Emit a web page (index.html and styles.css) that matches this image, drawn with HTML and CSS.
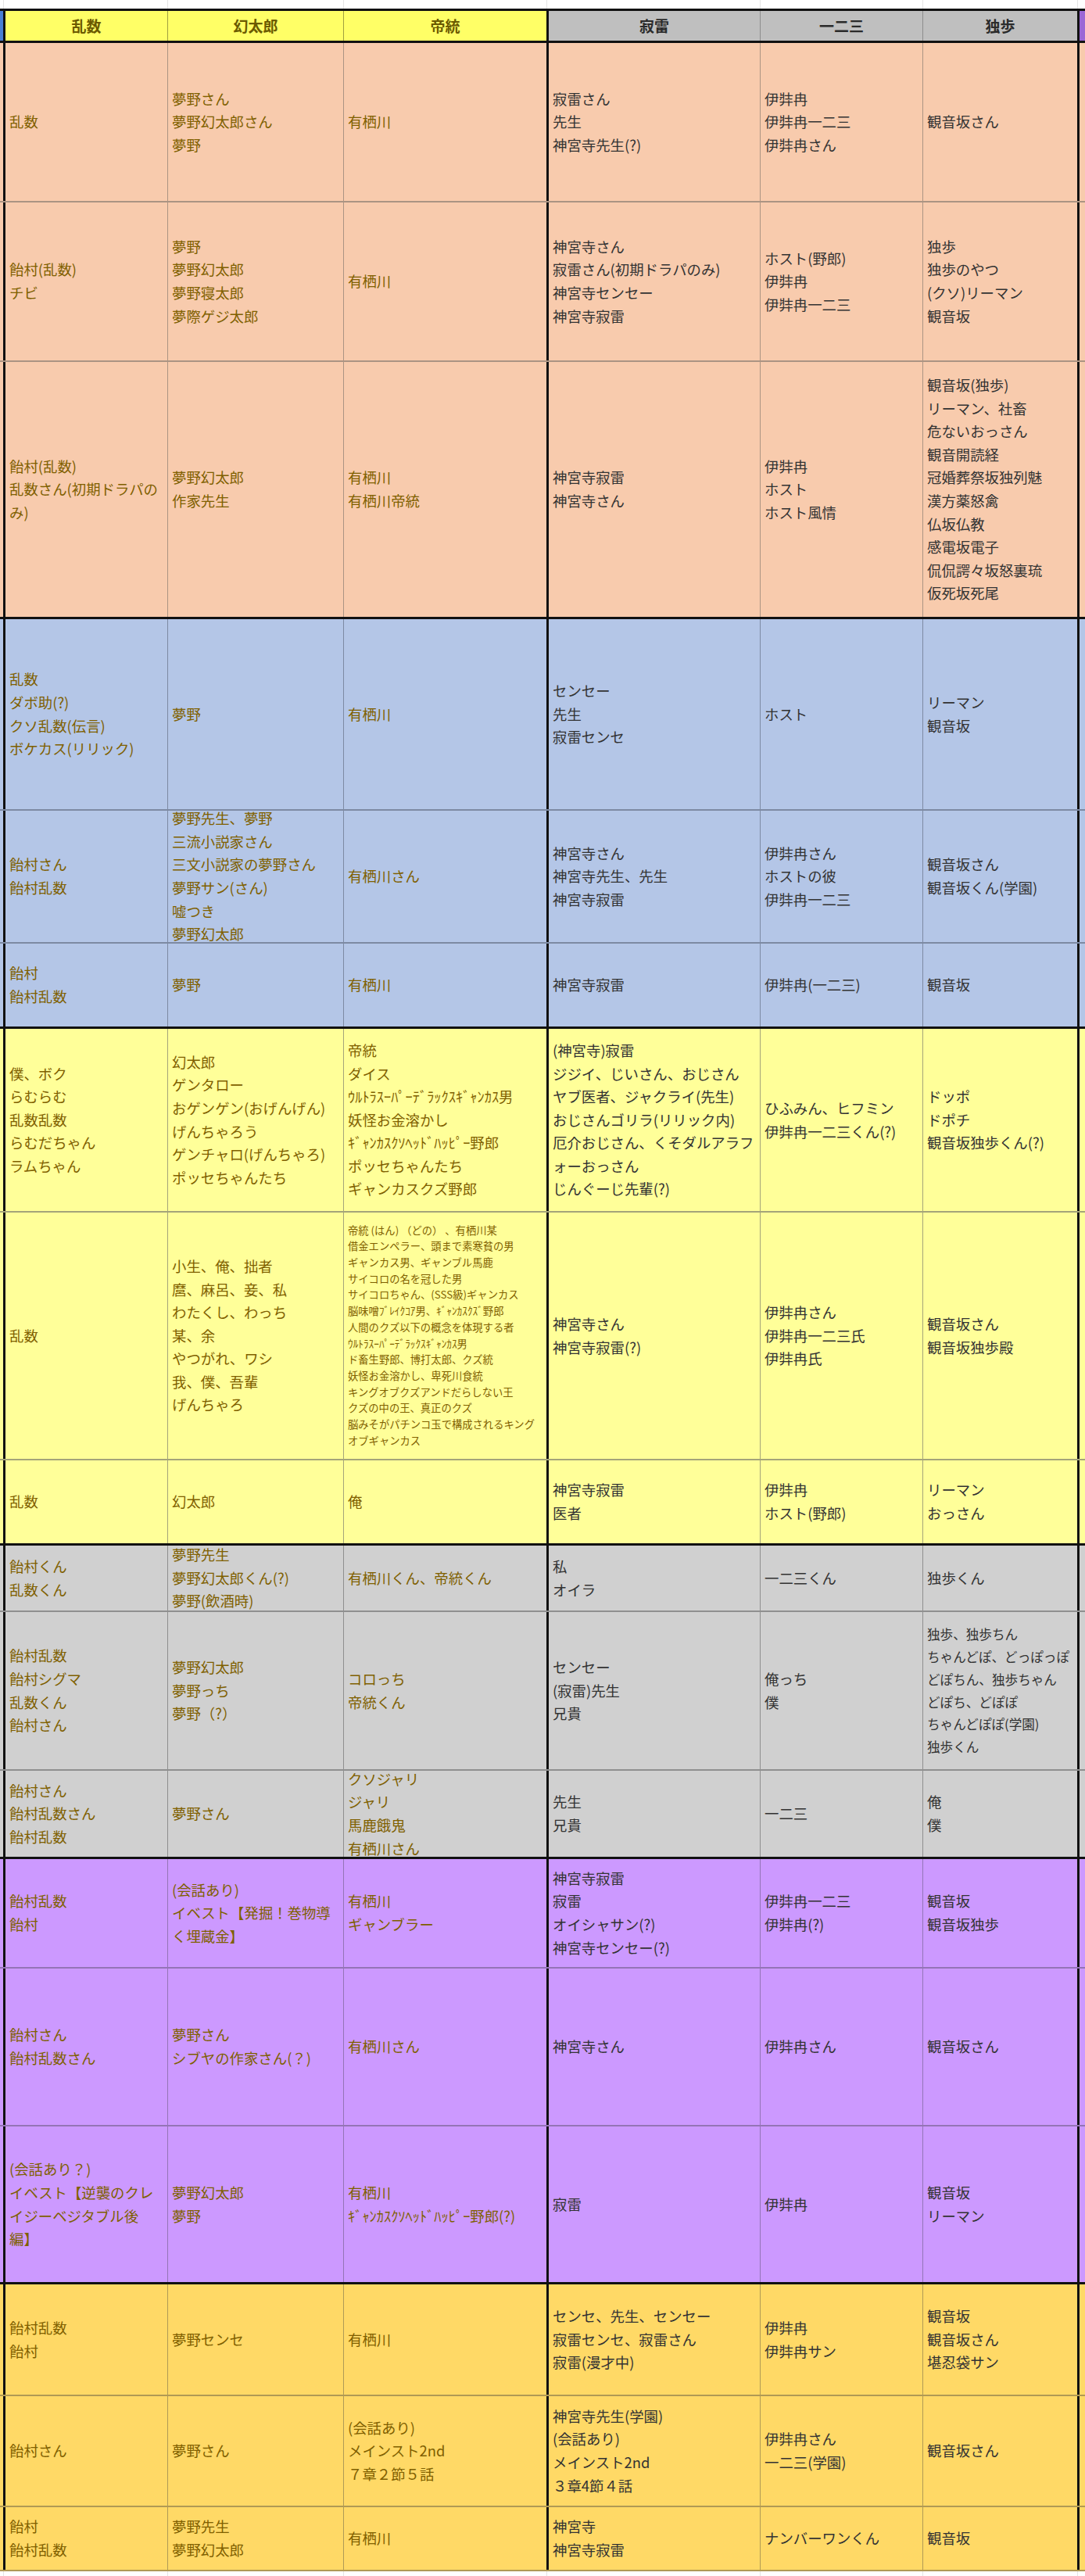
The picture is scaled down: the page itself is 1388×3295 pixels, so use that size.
FILE: index.html
```html
<!DOCTYPE html>
<html lang="ja">
<head>
<meta charset="utf-8">
<title>呼び方表</title>
<link rel="stylesheet" href="styles.css">
</head>
<body>
<div class="sheet">
  <div class="row strip top">
    <div class="c c0"></div><div class="c c1"></div><div class="c c2"></div><div class="c c3"></div><div class="c c4"></div><div class="c c5"></div><div class="c c6"></div><div class="c c7"></div>
  </div>

  <div class="row head">
    <div class="c c0"></div>
    <div class="c c1"><div>乱数</div></div>
    <div class="c c2"><div>幻太郎</div></div>
    <div class="c c3"><div>帝統</div></div>
    <div class="c c4"><div>寂雷</div></div>
    <div class="c c5"><div>一二三</div></div>
    <div class="c c6"><div>独歩</div></div>
    <div class="c c7"></div>
  </div>

  <!-- orange group -->
  <div class="row g-orange r1">
    <div class="c c0"></div>
    <div class="c c1"><div>乱数</div></div>
    <div class="c c2"><div>夢野さん<br>夢野幻太郎さん<br>夢野</div></div>
    <div class="c c3"><div>有栖川</div></div>
    <div class="c c4"><div>寂雷さん<br>先生<br>神宮寺先生(?)</div></div>
    <div class="c c5"><div>伊弉冉<br>伊弉冉一二三<br>伊弉冉さん</div></div>
    <div class="c c6"><div>観音坂さん</div></div>
    <div class="c c7"></div>
  </div>
  <div class="row g-orange r2">
    <div class="c c0"></div>
    <div class="c c1"><div>飴村(乱数)<br>チビ</div></div>
    <div class="c c2"><div>夢野<br>夢野幻太郎<br>夢野寝太郎<br>夢際ゲジ太郎</div></div>
    <div class="c c3"><div>有栖川</div></div>
    <div class="c c4"><div>神宮寺さん<br>寂雷さん(初期ドラパのみ)<br>神宮寺センセー<br>神宮寺寂雷</div></div>
    <div class="c c5"><div>ホスト(野郎)<br>伊弉冉<br>伊弉冉一二三</div></div>
    <div class="c c6"><div>独歩<br>独歩のやつ<br>(クソ)リーマン<br>観音坂</div></div>
    <div class="c c7"></div>
  </div>
  <div class="row g-orange r3 last">
    <div class="c c0"></div>
    <div class="c c1"><div>飴村(乱数)<br>乱数さん(初期ドラパの<br>み)</div></div>
    <div class="c c2"><div>夢野幻太郎<br>作家先生</div></div>
    <div class="c c3"><div>有栖川<br>有栖川帝統</div></div>
    <div class="c c4"><div>神宮寺寂雷<br>神宮寺さん</div></div>
    <div class="c c5"><div>伊弉冉<br>ホスト<br>ホスト風情</div></div>
    <div class="c c6"><div>観音坂(独歩)<br>リーマン、社畜<br>危ないおっさん<br>観音開読経<br>冠婚葬祭坂独列魅<br>漢方薬怒禽<br>仏坂仏教<br>感電坂電子<br>侃侃諤々坂怒裏琉<br>仮死坂死尾</div></div>
    <div class="c c7"></div>
  </div>

  <!-- blue group -->
  <div class="row g-blue first r4">
    <div class="c c0"></div>
    <div class="c c1"><div>乱数<br>ダボ助(?)<br>クソ乱数(伝言)<br>ボケカス(リリック)</div></div>
    <div class="c c2"><div>夢野</div></div>
    <div class="c c3"><div>有栖川</div></div>
    <div class="c c4"><div>センセー<br>先生<br>寂雷センセ</div></div>
    <div class="c c5"><div>ホスト</div></div>
    <div class="c c6"><div>リーマン<br>観音坂</div></div>
    <div class="c c7"></div>
  </div>
  <div class="row g-blue r5">
    <div class="c c0"></div>
    <div class="c c1"><div>飴村さん<br>飴村乱数</div></div>
    <div class="c c2"><div>夢野先生、夢野<br>三流小説家さん<br>三文小説家の夢野さん<br>夢野サン(さん)<br>嘘つき<br>夢野幻太郎</div></div>
    <div class="c c3"><div>有栖川さん</div></div>
    <div class="c c4"><div>神宮寺さん<br>神宮寺先生、先生<br>神宮寺寂雷</div></div>
    <div class="c c5"><div>伊弉冉さん<br>ホストの彼<br>伊弉冉一二三</div></div>
    <div class="c c6"><div>観音坂さん<br>観音坂くん(学園)</div></div>
    <div class="c c7"></div>
  </div>
  <div class="row g-blue r6 last">
    <div class="c c0"></div>
    <div class="c c1"><div>飴村<br>飴村乱数</div></div>
    <div class="c c2"><div>夢野</div></div>
    <div class="c c3"><div>有栖川</div></div>
    <div class="c c4"><div>神宮寺寂雷</div></div>
    <div class="c c5"><div>伊弉冉(一二三)</div></div>
    <div class="c c6"><div>観音坂</div></div>
    <div class="c c7"></div>
  </div>

  <!-- yellow group -->
  <div class="row g-yellow first r7">
    <div class="c c0"></div>
    <div class="c c1"><div>僕、ボク<br>らむらむ<br>乱数乱数<br>らむだちゃん<br>ラムちゃん</div></div>
    <div class="c c2"><div>幻太郎<br>ゲンタロー<br>おゲンゲン(おげんげん)<br>げんちゃろう<br>ゲンチャロ(げんちゃろ)<br>ポッセちゃんたち</div></div>
    <div class="c c3"><div>帝統<br>ダイス<br>ｳﾙﾄﾗｽｰﾊﾟｰﾃﾞﾗｯｸｽｷﾞｬﾝｶｽ男<br>妖怪お金溶かし<br>ｷﾞｬﾝｶｽｸｿﾍｯﾄﾞﾊｯﾋﾟｰ野郎<br>ポッセちゃんたち<br>ギャンカスクズ野郎</div></div>
    <div class="c c4"><div>(神宮寺)寂雷<br>ジジイ、じいさん、おじさん<br>ヤブ医者、ジャクライ(先生)<br>おじさんゴリラ(リリック内)<br>厄介おじさん、くそダルアラフ<br>ォーおっさん<br>じんぐーじ先輩(?)</div></div>
    <div class="c c5"><div>ひふみん、ヒフミン<br>伊弉冉一二三くん(?)</div></div>
    <div class="c c6"><div>ドッポ<br>ドポチ<br>観音坂独歩くん(?)</div></div>
    <div class="c c7"></div>
  </div>
  <div class="row g-yellow r8">
    <div class="c c0"></div>
    <div class="c c1"><div>乱数</div></div>
    <div class="c c2"><div>小生、俺、拙者<br>麿、麻呂、妾、私<br>わたくし、わっち<br>某、余<br>やつがれ、ワシ<br>我、僕、吾輩<br>げんちゃろ</div></div>
    <div class="c c3 small"><div>帝統 (はん) （どの） 、有栖川某<br>借金エンペラー、頭まで素寒貧の男<br>ギャンカス男、ギャンブル馬鹿<br>サイコロの名を冠した男<br>サイコロちゃん、(SSS級)ギャンカス<br>脳味噌ﾌﾞﾚｲｸｺｱ男、ｷﾞｬﾝｶｽｸｽﾞ野郎<br>人間のクズ以下の概念を体現する者<br>ｳﾙﾄﾗｽｰﾊﾟｰﾃﾞﾗｯｸｽｷﾞｬﾝｶｽ男<br>ド畜生野郎、博打太郎、クズ統<br>妖怪お金溶かし、卑死川食統<br>キングオブクズアンドだらしない王<br>クズの中の王、真正のクズ<br>脳みそがパチンコ玉で構成されるキング<br>オブギャンカス</div></div>
    <div class="c c4"><div>神宮寺さん<br>神宮寺寂雷(?)</div></div>
    <div class="c c5"><div>伊弉冉さん<br>伊弉冉一二三氏<br>伊弉冉氏</div></div>
    <div class="c c6"><div>観音坂さん<br>観音坂独歩殿</div></div>
    <div class="c c7"></div>
  </div>
  <div class="row g-yellow r9 last">
    <div class="c c0"></div>
    <div class="c c1"><div>乱数</div></div>
    <div class="c c2"><div>幻太郎</div></div>
    <div class="c c3"><div>俺</div></div>
    <div class="c c4"><div>神宮寺寂雷<br>医者</div></div>
    <div class="c c5"><div>伊弉冉<br>ホスト(野郎)</div></div>
    <div class="c c6"><div>リーマン<br>おっさん</div></div>
    <div class="c c7"></div>
  </div>

  <!-- gray group -->
  <div class="row g-gray first r10">
    <div class="c c0"></div>
    <div class="c c1"><div>飴村くん<br>乱数くん</div></div>
    <div class="c c2"><div>夢野先生<br>夢野幻太郎くん(?)<br>夢野(飲酒時)</div></div>
    <div class="c c3"><div>有栖川くん、帝統くん</div></div>
    <div class="c c4"><div>私<br>オイラ</div></div>
    <div class="c c5"><div>一二三くん</div></div>
    <div class="c c6"><div>独歩くん</div></div>
    <div class="c c7"></div>
  </div>
  <div class="row g-gray r11">
    <div class="c c0"></div>
    <div class="c c1"><div>飴村乱数<br>飴村シグマ<br>乱数くん<br>飴村さん</div></div>
    <div class="c c2"><div>夢野幻太郎<br>夢野っち<br>夢野（?）</div></div>
    <div class="c c3"><div>コロっち<br>帝統くん</div></div>
    <div class="c c4"><div>センセー<br>(寂雷)先生<br>兄貴</div></div>
    <div class="c c5"><div>俺っち<br>僕</div></div>
    <div class="c c6 compact"><div>独歩、独歩ちん<br>ちゃんどぽ、どっぽっぽ<br>どぽちん、独歩ちゃん<br>どぽち、どぽぽ<br>ちゃんどぽぽ(学園)<br>独歩くん</div></div>
    <div class="c c7"></div>
  </div>
  <div class="row g-gray r12 last">
    <div class="c c0"></div>
    <div class="c c1"><div>飴村さん<br>飴村乱数さん<br>飴村乱数</div></div>
    <div class="c c2"><div>夢野さん</div></div>
    <div class="c c3"><div>クソジャリ<br>ジャリ<br>馬鹿餓鬼<br>有栖川さん</div></div>
    <div class="c c4"><div>先生<br>兄貴</div></div>
    <div class="c c5"><div>一二三</div></div>
    <div class="c c6"><div>俺<br>僕</div></div>
    <div class="c c7"></div>
  </div>

  <!-- purple group -->
  <div class="row g-purple first r13">
    <div class="c c0"></div>
    <div class="c c1"><div>飴村乱数<br>飴村</div></div>
    <div class="c c2"><div>(会話あり)<br>イベスト【発掘！巻物導<br>く埋蔵金】</div></div>
    <div class="c c3"><div>有栖川<br>ギャンブラー</div></div>
    <div class="c c4"><div>神宮寺寂雷<br>寂雷<br>オイシャサン(?)<br>神宮寺センセー(?)</div></div>
    <div class="c c5"><div>伊弉冉一二三<br>伊弉冉(?)</div></div>
    <div class="c c6"><div>観音坂<br>観音坂独歩</div></div>
    <div class="c c7"></div>
  </div>
  <div class="row g-purple r14">
    <div class="c c0"></div>
    <div class="c c1"><div>飴村さん<br>飴村乱数さん</div></div>
    <div class="c c2"><div>夢野さん<br>シブヤの作家さん(？)</div></div>
    <div class="c c3"><div>有栖川さん</div></div>
    <div class="c c4"><div>神宮寺さん</div></div>
    <div class="c c5"><div>伊弉冉さん</div></div>
    <div class="c c6"><div>観音坂さん</div></div>
    <div class="c c7"></div>
  </div>
  <div class="row g-purple r15 last">
    <div class="c c0"></div>
    <div class="c c1"><div>(会話あり？)<br>イベスト【逆襲のクレ<br>イジーベジタブル後<br>編】</div></div>
    <div class="c c2"><div>夢野幻太郎<br>夢野</div></div>
    <div class="c c3"><div>有栖川<br>ｷﾞｬﾝｶｽｸｿﾍｯﾄﾞﾊｯﾋﾟｰ野郎(?)</div></div>
    <div class="c c4"><div>寂雷</div></div>
    <div class="c c5"><div>伊弉冉</div></div>
    <div class="c c6"><div>観音坂<br>リーマン</div></div>
    <div class="c c7"></div>
  </div>

  <!-- gold group -->
  <div class="row g-gold first r16">
    <div class="c c0"></div>
    <div class="c c1"><div>飴村乱数<br>飴村</div></div>
    <div class="c c2"><div>夢野センセ</div></div>
    <div class="c c3"><div>有栖川</div></div>
    <div class="c c4"><div>センセ、先生、センセー<br>寂雷センセ、寂雷さん<br>寂雷(漫才中)</div></div>
    <div class="c c5"><div>伊弉冉<br>伊弉冉サン</div></div>
    <div class="c c6"><div>観音坂<br>観音坂さん<br>堪忍袋サン</div></div>
    <div class="c c7"></div>
  </div>
  <div class="row g-gold r17">
    <div class="c c0"></div>
    <div class="c c1"><div>飴村さん</div></div>
    <div class="c c2"><div>夢野さん</div></div>
    <div class="c c3"><div>(会話あり)<br>メインスト2nd<br>７章２節５話</div></div>
    <div class="c c4"><div>神宮寺先生(学園)<br>(会話あり)<br>メインスト2nd<br>３章4節４話</div></div>
    <div class="c c5"><div>伊弉冉さん<br>一二三(学園)</div></div>
    <div class="c c6"><div>観音坂さん</div></div>
    <div class="c c7"></div>
  </div>
  <div class="row g-gold r18">
    <div class="c c0"></div>
    <div class="c c1"><div>飴村<br>飴村乱数</div></div>
    <div class="c c2"><div>夢野先生<br>夢野幻太郎</div></div>
    <div class="c c3"><div>有栖川</div></div>
    <div class="c c4"><div>神宮寺<br>神宮寺寂雷</div></div>
    <div class="c c5"><div>ナンバーワンくん</div></div>
    <div class="c c6"><div>観音坂</div></div>
    <div class="c c7"></div>
  </div>

  <div class="row strip bottom">
    <div class="c c0"></div><div class="c c1"></div><div class="c c2"></div><div class="c c3"></div><div class="c c4"></div><div class="c c5"></div><div class="c c6"></div><div class="c c7"></div>
  </div>
</div>
</body>
</html>
```

FILE: styles.css
```css
html, body {
  margin: 0;
  padding: 0;
  background: #ffffff;
}

body {
  width: 1388px;
  overflow: hidden;
  font-family: "Noto Sans CJK JP", "Noto Sans", sans-serif;
}

.sheet {
  width: 1388px;
}

.row {
  display: grid;
  grid-template-columns: 4px 210px 225px 260px 273px 208px 198px 10px;
  box-sizing: border-box;
  --bg: #ffffff;
  --line: #a0a0a0;
  background: var(--bg);
}

.c {
  box-sizing: border-box;
  display: flex;
  flex-direction: column;
  justify-content: center;
  overflow: hidden;
  white-space: nowrap;
  padding-left: 5px;
  font-size: 18.4px;
  line-height: 29.6px;
  color: #333333;
  background: var(--bg);
}

.c0 { padding: 0; }
.c7 { padding: 0; }

.c1 { border-left: 3px solid #111; color: #7f6000; }
.c2 { border-left: 1px solid var(--line); color: #7f6000; }
.c3 { border-left: 1px solid var(--line); color: #7f6000; }
.c4 { border-left: 3px solid #111; }
.c5 { border-left: 1px solid var(--line); }
.c6 { border-left: 1px solid var(--line); }
.c7 { border-left: 3px solid #111; }

.c.small {
  font-size: 13.3px;
  line-height: 20.7px;
}

.c.compact {
  font-size: 16.6px;
  line-height: 28.7px;
}

/* top / bottom spreadsheet strips */
.strip { height: 11px; }
.strip .c { border-left: 1px solid #e4e4e4; }
.strip .c0 { border-left: none; }
.strip.bottom { height: 6px; }

/* header */
.head {
  height: 44px;
  border-top: 3px solid #111;
  border-bottom: 3px solid #111;
}
.head .c {
  align-items: center;
  padding: 0;
  font-weight: 700;
  font-size: 19px;
  line-height: 26px;
}
.head .c0 { background: #4a7fd4; }
.head .c1, .head .c2, .head .c3 { background: #ffff66; color: #6b5a00; }
.head .c2, .head .c3 { border-left-color: #a0a040; }
.head .c4, .head .c5, .head .c6 { background: #bfbfbf; color: #2b2b2b; }
.head .c5, .head .c6 { border-left-color: #8c8c8c; }
.head .c7 { background: #9b67d6; }

/* groups */
.g-orange { --bg: #f8cbad; --line: #ab9483; border-bottom: 2px solid #ab9483; }
.g-blue   { --bg: #b4c6e7; --line: #7d8aa3; border-bottom: 2px solid #7d8aa3; }
.g-yellow { --bg: #ffff99; --line: #a4a47a; border-bottom: 2px solid #a4a47a; }
.g-gray   { --bg: #d0d0d0; --line: #8f8f8f; border-bottom: 2px solid #8f8f8f; }
.g-purple { --bg: #cc99ff; --line: #9474b6; border-bottom: 2px solid #9474b6; }
.g-gold   { --bg: #ffd966; --line: #b09a55; border-bottom: 2px solid #b09a55; }

.row.last { border-bottom: none; }
.row.first { border-top: 3px solid #111; }

/* row heights (spreadsheet rows) */
.r1  { height: 204px; }
.r2  { height: 204px; }
.r3  { height: 326px; }
.r4  { height: 248px; }
.r5  { height: 170px; }
.r6  { height: 106px; }
.r7  { height: 238px; }
.r8  { height: 317px; }
.r9  { height: 106px; }
.r10 { height: 88px; }
.r11 { height: 203px; }
.r12 { height: 110px; }
.r13 { height: 143px; }
.r14 { height: 202px; }
.r15 { height: 199px; }
.r16 { height: 146px; }
.r17 { height: 142px; }
.r18 { height: 82px; }
```
